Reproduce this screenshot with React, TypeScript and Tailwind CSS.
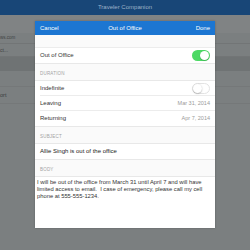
import React from "react";

function Toggle({ on }: { on: boolean }) {
  return on ? (
    <span className="relative block h-[11px] w-[18px] rounded-full bg-[#4cd964]">
      <span className="absolute right-[1px] top-[1px] h-[9px] w-[9px] rounded-full bg-white shadow-[0_0.5px_1px_rgba(0,0,0,0.3)]" />
    </span>
  ) : (
    <span className="relative block h-[11px] w-[18px] rounded-full border border-[#e3e3e3] bg-white">
      <span className="absolute left-0 top-0 h-[9px] w-[9px] rounded-full bg-white shadow-[0_0.5px_1.5px_rgba(0,0,0,0.35)]" />
    </span>
  );
}

function Row({ label, value, last }: { label: string; value?: React.ReactNode; last?: boolean }) {
  return (
    <div className="flex h-[15px] shrink-0 items-center justify-between bg-white pl-[5px]">
      <div className={"flex h-full flex-1 items-center justify-between pr-[5px] " + (last ? "" : "border-b border-[#ececec]")}>
        <span className="text-[6px] text-[#333]">{label}</span>
        {value}
      </div>
    </div>
  );
}

function Section({ title }: { title: string }) {
  return (
    <div className="flex h-[18px] shrink-0 items-end border-y border-[#e8e8e8] bg-[#fafafa] px-[5px] pb-[2px] text-[4.5px] uppercase tracking-[0.2px] text-[#a3a3a3]">
      {title}
    </div>
  );
}

export default function App() {
  return (
    <div className="relative h-[250px] w-[250px] overflow-hidden bg-[#7b7f80] font-['Liberation_Sans',Arial,sans-serif]">
      {/* page under the sheet */}
      <div className="flex h-[15px] items-center justify-center bg-[#184677] text-[6px] text-[#9fb2c8]">Traveler Companion</div>
      <div className="flex flex-col text-[#3f4243]">
        <div className="h-[18px] bg-[#808384]" />
        <div className="flex h-[11px] items-center border-b border-[#727576] pt-[1px] text-[4.5px]">ws.com</div>
        <div className="flex h-[13px] items-center border-b border-[#727576] pt-[1px] text-[5px]">ct...</div>
        <div className="h-[14px] bg-[#6f7374]" />
        <div className="h-[16px] border-b border-[#757879]" />
        <div className="flex h-[17px] items-center border-b border-[#757879] pt-[1px] text-[5.5px] text-[#3a3d3e]">ort</div>
      </div>

      {/* modal */}
      <div className="absolute left-[35px] top-[21px] flex h-[207px] w-[180px] flex-col overflow-hidden bg-white shadow-[0_0_2px_rgba(0,0,0,0.25)]">
        <div className="flex h-[14px] shrink-0 items-center justify-between bg-[#1c76d2] px-[5px] text-[6px] text-white">
          <span className="w-[30px]">Cancel</span>
          <span>Out of Office</span>
          <span className="w-[30px] text-right">Done</span>
        </div>
        <div className="h-[13px] shrink-0 border-b border-[#ececec] bg-[#fafafa]" />
        <Row label="Out of Office" value={<Toggle on />} last />
        <Section title="Duration" />
        <Row label="Indefinite" value={<Toggle on={false} />} />
        <Row label="Leaving" value={<span className="text-[5.5px] text-[#9a9a9a]">Mar 31, 2014</span>} />
        <Row label="Returning" value={<span className="text-[5.5px] text-[#9a9a9a]">Apr 7, 2014</span>} last />
        <Section title="Subject" />
        <div className="flex h-[15px] shrink-0 items-center bg-white px-[5px] text-[6px] text-[#222]">
          Allie Singh is out of the office
        </div>
        <Section title="Body" />
        <p className="flex-1 bg-white pl-[2px] pr-[4px] pt-[2px] text-[5.8px] leading-[7px] text-[#333]">
          I will be out of the office from March 31 until April 7 and will have limited access to email.&nbsp; I case of emergency, please call my cell phone at 555-555-1234.
        </p>
      </div>
    </div>
  );
}
